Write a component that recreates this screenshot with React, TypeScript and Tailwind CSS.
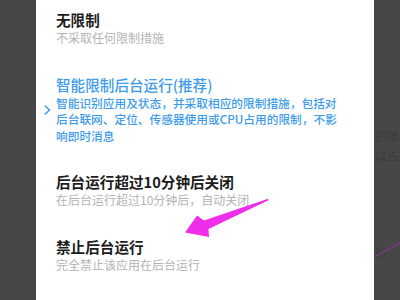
import { ReactNode } from 'react'

const FONT = { fontFamily: '"Noto Sans CJK SC", "Noto Sans", sans-serif' }

// Um item da lista de modos de execução em segundo plano
function Opcao({
  titulo,
  descricao,
  ativo = false,
  className = '',
}: {
  titulo: string
  descricao: ReactNode
  ativo?: boolean
  className?: string
}) {
  return (
    <div className={`relative ${className}`}>
      {ativo && (
        <svg
          className="absolute left-[-12px] top-[30px]"
          width="7"
          height="10"
          viewBox="0 0 7 10"
          fill="none"
        >
          <path d="M1.2 1 L5.5 5 L1.2 9" stroke="#3d9be9" strokeWidth="1.6" strokeLinecap="round" strokeLinejoin="round" />
        </svg>
      )}
      <div
        className={`text-[14.6px] leading-[20px] ${ativo ? 'text-[#3d9be9] font-medium' : 'text-[#1c1c1c] font-semibold'}`}
      >
        {titulo}
      </div>
      {descricao}
    </div>
  )
}

export default function App() {
  return (
    <div className="w-[400px] h-[300px] flex bg-[#474747] overflow-hidden relative" style={FONT}>
      <div className="w-[36px] shrink-0" />

      {/* painel branco central */}
      <div className="w-[338px] shrink-0 bg-white pl-[20px] pt-[10px] flex flex-col">
        <Opcao
          titulo="无限制"
          descricao={<div className="text-[12px] leading-[16px] text-[#b3b3b3]">不采取任何限制措施</div>}
        />
        <Opcao
          ativo
          className="mt-[28.5px]"
          titulo="智能限制后台运行(推荐)"
          descricao={
            <div className="text-[11.7px] leading-[16.5px] text-[#3d9be9] font-medium">
              <div>智能识别应用及状态，并采取相应的限制措施，包括对</div>
              <div>后台联网、定位、传感器使用或CPU占用的限制，不影</div>
              <div>响即时消息</div>
            </div>
          }
        />
        <Opcao
          className="mt-[27.5px]"
          titulo="后台运行超过10分钟后关闭"
          descricao={<div className="text-[12px] leading-[16px] text-[#b3b3b3]">在后台运行超过10分钟后，自动关闭</div>}
        />
        <Opcao
          className="mt-[29px]"
          titulo="禁止后台运行"
          descricao={<div className="text-[12px] leading-[16px] text-[#b3b3b3]">完全禁止该应用在后台运行</div>}
        />
      </div>

      {/* fundo escurecido à direita, com restos da tela de trás */}
      <div className="flex-1 overflow-hidden relative">
        <div className="pt-[126px] pl-[1px] text-[12px] leading-[20px] text-[#3c3c3c] whitespace-nowrap font-medium">
          <div>的限</div>
          <div>以占</div>
        </div>
        <div className="mt-[78px] pl-[1px] text-[12px] text-[#3c3c3c]">和</div>
        <svg className="absolute left-0 top-[238px]" width="26" height="24" viewBox="0 0 26 24">
          <path d="M0 19 L26 5" stroke="#6a3f6e" strokeWidth="2" />
        </svg>
      </div>

      {/* seta de destaque */}
      <svg className="absolute left-0 top-0 pointer-events-none" width="400" height="300" viewBox="0 0 400 300">
        <path
          d="M268 198.8 L204 220.5 L197 215.5 L185 232.5 L209 237 L208.5 229 L268.5 200.2 Z"
          fill="#ee2ee8"
        />
      </svg>
    </div>
  )
}
